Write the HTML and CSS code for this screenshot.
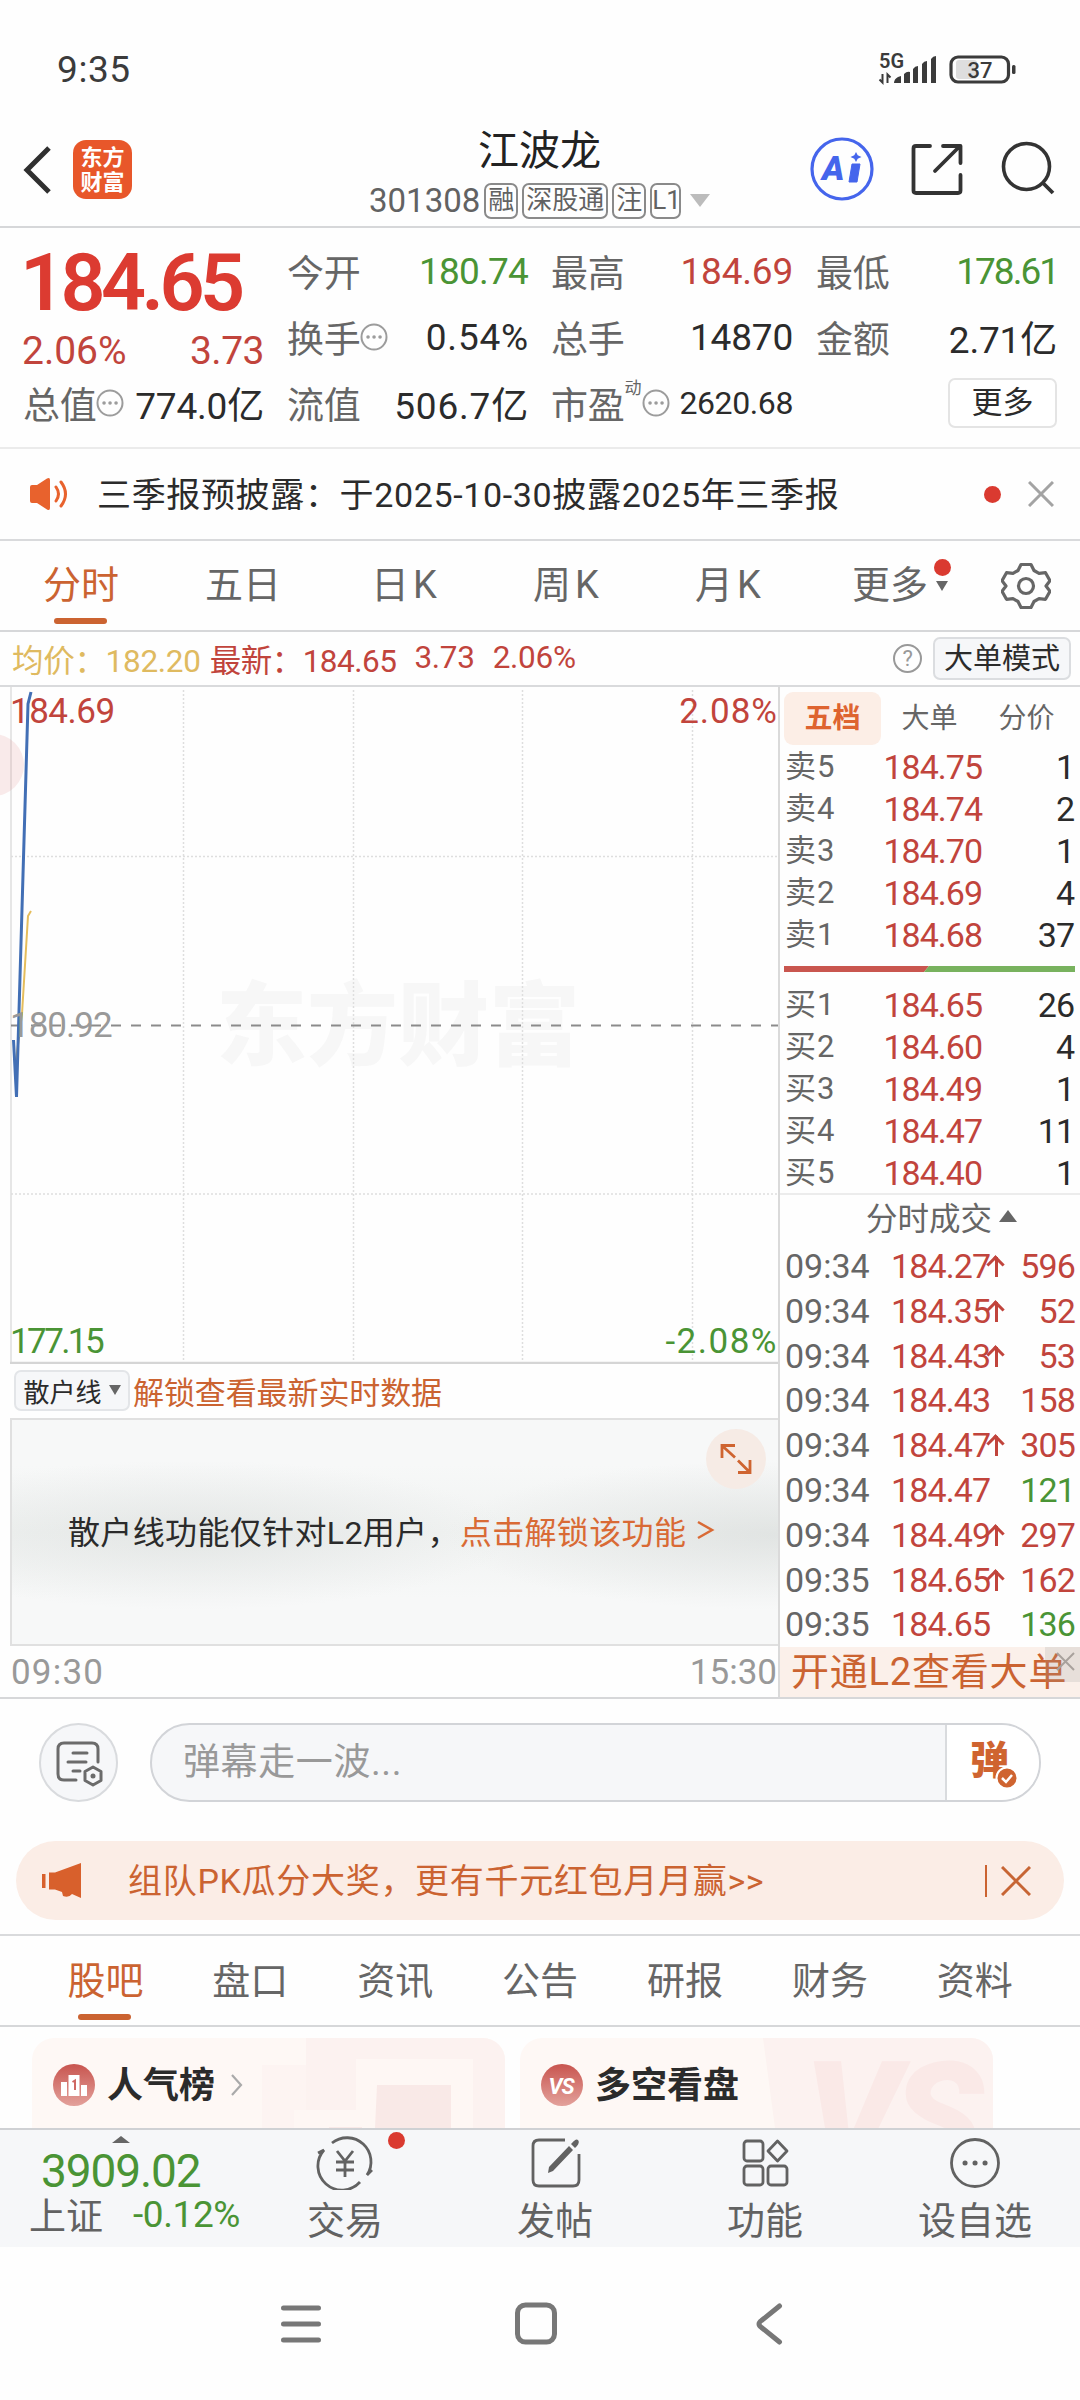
FILE: index.html
```html
<!DOCTYPE html>
<html lang="zh-CN">
<head>
<meta charset="utf-8">
<title>江波龙 301308</title>
<link rel="stylesheet" href="styles.css">
</head>
<body>
<div class="screen">

<div class="status">
  <span class="clock">9:35</span>
  <svg class="status-icons" width="144" height="40" viewBox="874 50 144 40">
    <text x="879" y="68" class="net">5G</text>
    <g fill="#3b3b3b"><path d="M894 83q0-4 4-6l3-1v7z"/><path d="M904 83v-9q3-3 6-2v11zM913 83V69q2-3 5-3v17zM922 83V64q2-3 5-3v22zM931 83V59q2-3 5-3v27z"/></g>
    <path d="M882.500 74v8.500l-3-3M887.500 83v-8.500l3 3" fill="none" stroke="#3b3b3b" stroke-width="2"/>
    <rect x="956" y="60" width="21" height="19" rx="3" fill="#dedede"/>
    <rect x="951" y="57" width="57.500" height="25" rx="7" fill="none" stroke="#3b3b3b" stroke-width="3.200"/>
    <rect x="1012" y="65" width="3.500" height="9" rx="1.500" fill="#3b3b3b"/>
    <text x="980" y="78" class="bat">37</text>
  </svg>
</div>

<header class="head">
  <div class="head-left">
    <svg class="back" width="30" height="50" viewBox="0 0 30 50"><path d="M26 3L4 25l22 22" fill="none" stroke="#303030" stroke-width="5"/></svg>
    <div class="logo"><span>东方</span><span>财富</span></div>
  </div>
  <div class="head-mid">
    <h1>江波龙</h1>
    <div class="code"><span class="num">301308</span><i>融</i><i class="w3">深股通</i><i>注</i><i>L1</i><b class="tri-down"></b></div>
  </div>
  <svg class="head-icons" width="260" height="70" viewBox="805 134 260 70">
    <circle cx="842" cy="169" r="30" fill="none" stroke="#4565ec" stroke-width="3.200"/>
    <text x="822" y="180" class="ai">A</text>
    <path d="M852 164h8l-3 18h-8z" fill="#4565ec" stroke="#4565ec" stroke-linejoin="round"/>
    <path d="M856 152l1.700 3.300 3.800 1.700-3.800 1.700-1.700 3.300-1.700-3.300-3.800-1.700 3.800-1.700z" fill="#4565ec"/>
    <path d="M930 146h-14q-2.500 0-2.500 2.500v42q0 2.500 2.500 2.500h42q2.500 0 2.500-2.500V175M943 146h17.500v17M960 146l-25 25" fill="none" stroke="#333" stroke-width="3.800" stroke-linecap="round" stroke-linejoin="round"/>
    <circle cx="1026.500" cy="166.500" r="23" fill="none" stroke="#333" stroke-width="3.600"/>
    <path d="M1042 182l11 11" stroke="#333" stroke-width="3.800"/>
  </svg>
</header>

<section class="quote">
  <div class="q-main">
    <div class="price">184.65</div>
    <div class="chg"><span>2.06%</span><span>3.73</span></div>
    <div class="q-cell"><label>总值</label><svg class="dots" viewBox="0 0 28 28"><circle cx="14" cy="14" r="12.500"/><path d="M8 14h.1M14 14h.1M20 14h.1"/></svg><span class="v">774.0亿</span></div>
  </div>
  <div class="q-col">
    <div class="q-cell"><label>今开</label><span class="v green">180.74</span></div>
    <div class="q-cell"><label>换手</label><svg class="dots" viewBox="0 0 28 28"><circle cx="14" cy="14" r="12.500"/><path d="M8 14h.1M14 14h.1M20 14h.1"/></svg><span class="v wide">0.54%</span></div>
    <div class="q-cell"><label>流值</label><span class="v wide">506.7亿</span></div>
  </div>
  <div class="q-col">
    <div class="q-cell"><label>最高</label><span class="v red">184.69</span></div>
    <div class="q-cell"><label>总手</label><span class="v">14870</span></div>
    <div class="q-cell"><label>市盈</label><sup>动</sup><svg class="dots" viewBox="0 0 28 28"><circle cx="14" cy="14" r="12.500"/><path d="M8 14h.1M14 14h.1M20 14h.1"/></svg><span class="v small">2620.68</span></div>
  </div>
  <div class="q-col">
    <div class="q-cell"><label>最低</label><span class="v green tight">178.61</span></div>
    <div class="q-cell"><label>金额</label><span class="v">2.71亿</span></div>
    <div class="q-cell"><button class="more">更多</button></div>
  </div>
</section>

<section class="notice">
  <svg width="40" height="36" viewBox="0 0 40 36"><path d="M1 11q0-2 2-2h5L18 2.500q3-1.500 3 1.500v28q0 3-3 1.500L8 27H3q-2 0-2-2z" fill="#e8622d"/><path d="M27 11q5 7 0 14M32 6q9 12 0 24" fill="none" stroke="#e8622d" stroke-width="3" stroke-linecap="round"/></svg>
  <p>三季报预披露：于2025-10-30披露2025年三季报</p>
  <span class="dot"></span>
  <svg width="26" height="26" viewBox="0 0 26 26"><path d="M1 1l24 24M25 1L1 25" stroke="#a3a3a3" stroke-width="3"/></svg>
</section>

<nav class="periods">
  <span class="on">分时</span><span>五日</span><span class="k">日K</span><span class="k">周K</span><span class="k">月K</span>
  <span class="p-more">更多<i class="dot"></i><b class="tri-down dark"></b></span>
  <svg class="gear" width="50" height="50" viewBox="-25 -25 50 50"><path d="M-5-21.500h10l3 6 5 2.800 6.500-.6 4.500 8-4 5.300v0l4 5.300-4.500 8-6.500-.6-5 2.800-3 6h-10l-3-6-5-2.800-6.500.6-4.500-8 4-5.300-4-5.300 4.500-8 6.500.6 5-2.800z" fill="none" stroke="#666" stroke-width="3.200" stroke-linejoin="round"/><circle r="7.500" fill="none" stroke="#666" stroke-width="3.200"/></svg>
</nav>

<div class="avg">
  <span class="yellow">均价：182.20</span><span class="red latest">最新：184.65</span><span class="red a3">3.73</span><span class="red a4">2.06%</span>
  <span class="q">?</span><button>大单模式</button>
</div>

<main class="board">
  <div class="left">
    <div class="chart">
      <span class="mark">东方财富</span>
      <svg width="778" height="677" viewBox="0 687 778 677">
        <g stroke="#dedede" stroke-width="1.500" fill="none">
          <g stroke-dasharray="2 2"><path d="M183.500 690V1362M353.500 690V1362M522.500 690V1362M692.500 690V1362M11 856.500H778M11 1194H778"/></g>
          <path d="M11 687V1363"/><path d="M10 1363H778" stroke="#d5d5d5" stroke-width="2.500"/>
        </g>
        <path d="M11 1025.500H778" stroke="#8b8b8b" stroke-width="2" stroke-dasharray="10 10"/>
        <circle cx="-7" cy="765" r="31" fill="#d65a5a" fill-opacity=".12"/>
        <path d="M16 1060L22 1014 28 916 31 911" fill="none" stroke="#e5bd5c" stroke-width="2"/>
        <path d="M13.500 1040L16.500 1097 28 704 31 692" fill="none" stroke="#426fb5" stroke-width="3"/>
      </svg>
      <span class="lb tl red">184.69</span><span class="lb tr red">2.08%</span>
      <span class="lb ml">180.92</span>
      <span class="lb bl green">177.15</span><span class="lb br green">-2.08%</span>
    </div>
    <div class="sub-head"><button>散户线<b class="tri-down dark"></b></button><span>解锁查看最新实时数据</span></div>
    <div class="locked">
      <p>散户线功能仅针对L2用户，<em>点击解锁该功能</em></p>
      <svg class="gt" width="18" height="20" viewBox="0 0 18 20"><path d="M1 2l14 8-14 8" fill="none" stroke="#d96a35" stroke-width="2.500"/></svg>
      <svg class="expand" width="60" height="60" viewBox="0 0 60 60"><circle cx="30" cy="30" r="30" fill="#f6ebe5"/><path d="M16 29V16.500h13M17 17.500l12 11M44 31v12.500H32M43 42.500l-11-11" fill="none" stroke="#cf6430" stroke-width="2.800"/></svg>
    </div>
    <div class="axis"><span>09:30</span><span>15:30</span></div>
  </div>

  <aside class="right">
    <div class="b-tabs"><span class="on">五档</span><span>大单</span><span>分价</span></div>
    <div class="levels">
      <div><span>卖5</span><span>184.75</span><span>1</span></div>
      <div><span>卖4</span><span>184.74</span><span>2</span></div>
      <div><span>卖3</span><span>184.70</span><span>1</span></div>
      <div><span>卖2</span><span>184.69</span><span>4</span></div>
      <div><span>卖1</span><span>184.68</span><span>37</span></div>
    </div>
    <svg class="ratio" width="291" height="6" viewBox="0 0 291 6"><path d="M0 0H145L140 6H0z" fill="#c9564f"/><path d="M145 0H291V6H140z" fill="#78b25e"/></svg>
    <div class="levels">
      <div><span>买1</span><span>184.65</span><span>26</span></div>
      <div><span>买2</span><span>184.60</span><span>4</span></div>
      <div><span>买3</span><span>184.49</span><span>1</span></div>
      <div><span>买4</span><span>184.47</span><span>11</span></div>
      <div><span>买5</span><span>184.40</span><span>1</span></div>
    </div>
    <div class="t-head">分时成交<b class="tri-up"></b></div>
    <div class="trades">
      <div><span>09:34</span><span class="up">184.27</span><span class="red">596</span></div>
      <div><span>09:34</span><span class="up">184.35</span><span class="red">52</span></div>
      <div><span>09:34</span><span class="up">184.43</span><span class="red">53</span></div>
      <div><span>09:34</span><span>184.43</span><span class="red">158</span></div>
      <div><span>09:34</span><span class="up">184.47</span><span class="red">305</span></div>
      <div><span>09:34</span><span>184.47</span><span class="green">121</span></div>
      <div><span>09:34</span><span class="up">184.49</span><span class="red">297</span></div>
      <div><span>09:35</span><span class="up">184.65</span><span class="red">162</span></div>
      <div><span>09:35</span><span>184.65</span><span class="green">136</span></div>
    </div>
    <div class="promo">开通L2查看大单<svg width="35" height="35" viewBox="0 0 35 35"><rect width="35" height="35" fill="#999" fill-opacity=".2"/><path d="M12 6l17 17M29 6L12 23" stroke="#a8a19c" stroke-width="2"/></svg></div>
  </aside>
</main>

<section class="talk">
  <div class="round"><svg width="50" height="50" viewBox="0 0 50 50"><path d="M22 42H10q-6 0-6-6V11q0-6 6-6h28q6 0 6 6v13M19 15h14M14 24h18M19 33h7" fill="none" stroke="#6b6b6b" stroke-width="3" stroke-linecap="round"/><path d="M39 29l8 4.500v9L39 47l-8-4.500v-9z" fill="#f6f7f9" stroke="#6b6b6b" stroke-width="3" stroke-linejoin="round"/><circle cx="39" cy="38" r="2.500" fill="#6b6b6b"/></svg></div>
  <div class="input"><span class="ph">弹幕走一波...</span><span class="dan">弹<svg width="24" height="24" viewBox="0 0 24 24"><circle cx="12" cy="12" r="10.500" fill="#cf6430" stroke="#fff" stroke-width="2"/><path d="M7 12l4 4 6-7" fill="none" stroke="#fff" stroke-width="2.500"/></svg></span></div>
</section>

<section class="banner">
  <svg width="42" height="36" viewBox="0 0 42 36"><path d="M1 11h3.500v14H1zM8 9.500h6L40 0v35l-9-4q-3 4-9 2l-1-4-7-2.500H8z" fill="#d8602c"/></svg>
  <p>组队PK瓜分大奖，更有千元红包月月赢&gt;&gt;</p>
  <i></i>
  <svg class="x" width="30" height="30" viewBox="0 0 30 30"><path d="M1 1l28 28M29 1L1 29" stroke="#c76534" stroke-width="3"/></svg>
</section>

<nav class="tabs"><span class="on">股吧</span><span>盘口</span><span>资讯</span><span>公告</span><span>研报</span><span>财务</span><span>资料</span></nav>

<section class="cards">
  <div class="card">
    <svg class="deco" width="473" height="90" viewBox="0 0 473 90"><path d="M274 0H473V90H230V27h44z" fill="#fcf2f0"/><path d="M230 27h44v45h-12v18h-32z" fill="#fdf4f2"/><path d="M324 21H441V90H262V72h62z" fill="#fef7f4"/><path d="M345 47h74v43h-76z" fill="#f9e9e7"/><path d="M297 89h33v1h-33z" fill="#f9e9e7"/></svg>
    <svg class="badge" width="42" height="42" viewBox="0 0 42 42"><defs><linearGradient id="g" x2="0" y2="1"><stop offset="0" stop-color="#c8554f"/><stop offset="1" stop-color="#e3a19b"/></linearGradient></defs><circle cx="21" cy="21" r="21" fill="url(#g)"/><path d="M8 18h6v14H8zM15.500 11h11v21h-11zM28 21h6v11h-6z" fill="#fff"/><path d="M19.500 18l2.500-1.500V26" fill="none" stroke="#cf6863" stroke-width="2"/></svg>
    <b>人气榜</b>
    <svg width="14" height="22" viewBox="0 0 14 22"><path d="M2 1l9 10-9 10" fill="none" stroke="#aaa" stroke-width="2.200"/></svg>
  </div>
  <div class="card">
    <svg class="deco" width="473" height="90" viewBox="0 0 473 90"><path d="M243 0H473V90H255z" fill="#fcf2f0"/><text x="284" y="130" class="vs-big">VS</text></svg>
    <svg class="badge" width="42" height="42" viewBox="0 0 42 42"><circle cx="21" cy="21" r="21" fill="url(#g)"/><text x="20" y="30" class="vs">VS</text></svg>
    <b>多空看盘</b>
  </div>
</section>

<footer class="bar">
  <div class="index"><b class="tri-up"></b><strong>3909.02</strong><p><span>上证</span><em>-0.12%</em></p></div>
  <div class="item"><svg width="60" height="54" viewBox="-30 -27 60 54"><g fill="none" stroke="#626262" stroke-width="2.800"><path d="M-13-20A24 24 0 0 1 22 12l5-5"/><path d="M15 19A24 24 0 0 1-21-13l-6 3"/><path d="M-8-12L0-2 8-12M0-2V14M-9-1H9M-9 7H9"/></g></svg><i class="dot"></i><span>交易</span></div>
  <div class="item"><svg width="60" height="54" viewBox="-30 -27 60 54"><path d="M10-23h-26q-6 0-6 6v34q0 6 6 6h34q6 0 6-6V-9" fill="none" stroke="#626262" stroke-width="2.800"/><path d="M14-17l4 4L-2 8l-5 2 1-6zM17-20q4-5 6-3t-1 6l-2 2-4-4z" fill="#626262"/></svg><span>发帖</span></div>
  <div class="item"><svg width="60" height="54" viewBox="-30 -27 60 54"><g fill="none" stroke="#626262" stroke-width="2.800" stroke-linejoin="round"><rect x="-21" y="-22" width="19" height="20" rx="3"/><rect x="-21" y="3" width="19" height="19" rx="3"/><rect x="3" y="3" width="19" height="19" rx="3"/><path d="M12.500-22L22-12 12.500-2 3-12z"/></g></svg><span>功能</span></div>
  <div class="item"><svg width="60" height="54" viewBox="-30 -27 60 54"><circle r="23.500" fill="none" stroke="#626262" stroke-width="2.800"/><path d="M-10 0h.1M0 0h.1M10 0h.1" stroke="#626262" stroke-width="5" stroke-linecap="round"/></svg><span>设自选</span></div>
</footer>

<nav class="sys">
  <svg width="540" height="50" viewBox="270 2299 540 50"><g fill="none" stroke="#777" stroke-width="5" stroke-linecap="round" stroke-linejoin="round"><path d="M283.500 2308h35M283.500 2324h35M283.500 2340h35"/><rect x="517.500" y="2305" width="37" height="37" rx="8"/><path d="M779.500 2306l-18 14.500q-5 3.500 0 7L779.500 2342"/></g></svg>
</nav>

</div>
</body>
</html>
```
FILE: styles.css
```css
* { box-sizing: border-box; }
body {
  margin: 0;
  background: #fefefe;
  color: #2b2b2b;
  font-family: Roboto, "Noto Sans CJK SC", sans-serif;
}
h1, p { margin: 0; font-weight: 400; }
i, em { font-style: normal; }
button { font: inherit; padding: 0; color: inherit; }
svg { display: block; flex: none; }
.screen { width: 1080px; height: 2400px; overflow: hidden; display: flex; flex-direction: column; }
.screen > * { flex: none; white-space: nowrap; }
.red { color: #c1443c; }
.green { color: #4a9435; }
.dot { display: block; width: 17px; height: 17px; border-radius: 50%; background: #da3a30; }
.tri-down { border: 10px solid transparent; border-top: 13px solid #bcbcbc; border-bottom: 0; }
.tri-down.dark { border-width: 10px 6.5px 0; border-top-color: #666; }
.tri-up { border: 9px solid transparent; border-bottom: 12px solid #666; border-top: 0; }

.status { height: 104px; padding: 36px 62px 0 57px; display: flex; justify-content: space-between; align-items: center; }
.clock { font-size: 37px; font-weight: 450; color: #3b3b3b; line-height: 68px; letter-spacing: .6px; }
.net { font: 600 20px Roboto, sans-serif; fill: #3b3b3b; }
.bat { font: 500 22px Roboto, sans-serif; fill: #3b3b3b; text-anchor: middle; }

.head { height: 124px; border-bottom: 2px solid #d6d7d9; padding: 0 15px 0 23px; display: grid; grid-template-columns: 342px 1fr 260px; }
.head-left { display: flex; align-items: center; gap: 20px; padding-top: 6px; }
.logo { width: 59px; height: 59px; border-radius: 13px; background: #e8572a; color: #fff; font-weight: 700; font-size: 22px; line-height: 25px; display: flex; flex-direction: column; align-items: center; justify-content: center; }
.head-mid { padding-top: 24px; }
h1 { font-size: 41px; line-height: 46px; color: #222; padding-left: 113px; }
.code { display: flex; align-items: center; height: 55px; padding: 0 0 2px 4px; gap: 4px; color: #626262; font-size: 27px; }
.code .num { font-size: 33px; letter-spacing: 0; }
.code i { width: 34px; height: 36px; border: 2px solid #8a8a8a; border-radius: 7px; line-height: 30px; text-align: center; font-size: 26px; }
.code i.w3 { width: 86px; }
.code i:nth-of-type(4) { width: 31px; }
.code b { margin-left: 5px; }
.head-icons { margin-top: 30px; }
.ai { font: italic 900 34px Roboto, sans-serif; fill: #4565ec; }

.quote { height: 221px; border-bottom: 2px solid #ebebeb; padding: 11px 22px 0 23px; display: grid; grid-template-columns: 241px 241px 242px 241px; column-gap: 23px; }
.q-col, .q-main { display: flex; flex-direction: column; }
.price { height: 87px; line-height: 89px; font-size: 79px; font-weight: 600; letter-spacing: -4.6px; color: #dc3b31; margin-left: -3px; }
.chg { height: 45px; padding-top: 4px; display: flex; justify-content: space-between; align-items: center; color: #c1443c; font-size: 39px; margin-left: -1px; }
.chg span:last-child { letter-spacing: -.5px; }
.q-cell { height: 66px; display: flex; align-items: center; font-size: 37px; padding-bottom: 2px; }
.q-cell label { color: #666; letter-spacing: -.3px; }
.q-cell .v { margin-left: auto; letter-spacing: -.2px; }
.q-cell .v.wide { letter-spacing: .8px; margin-right: -1px; }
.q-cell .v.green { letter-spacing: -.8px; }
.q-cell .v.tight { letter-spacing: -2px; margin-right: -1px; }
.q-cell .v.small { font-size: 32px; letter-spacing: -.4px; }
.q-cell sup { font-size: 17px; color: #666; align-self: flex-start; line-height: 20px; margin: 7px 1px 0 0; }
.dots { width: 28px; height: 28px; fill: none; stroke: #9c9c9c; stroke-width: 2; }
.dots path { stroke-width: 3.500; stroke-linecap: round; }
.more { margin-left: auto; width: 109px; height: 50px; border: 2px solid #e4e4e4; border-radius: 7px; background: #fff; font-size: 31px; line-height: 44px; }

.notice { height: 92px; border-bottom: 2px solid #d9dadc; padding: 0 26px 0 29px; display: flex; align-items: center; }
.notice p { font-size: 34px; margin-left: 28px; letter-spacing: .65px; padding-bottom: 4px; }
.notice .dot { margin-left: auto; margin-right: 27px; }

.periods { height: 91px; border-bottom: 2px solid #d6d7d9; display: flex; align-items: center; padding: 0 29px 0 0; font-size: 38px; color: #666; }
.periods > span { width: 162px; text-align: center; line-height: 91px; height: 91px; position: relative; }
.periods > .k { letter-spacing: 4px; padding-left: 2px; }
.periods > .p-more { margin-left: 17px; width: 125px; text-align: left; padding-left: 25px; }
.on { color: #cb6331; }
.periods .on:after, .tabs .on:after { content: ""; position: absolute; left: 50%; bottom: 7px; width: 53px; height: 6px; margin-left: -27px; border-radius: 3px; background: #cb6331; }
.p-more .dot { position: absolute; left: 107px; top: 19px; }
.p-more b { position: absolute; left: 109px; top: 41px; }
.gear { margin-left: auto; }

.avg { height: 55px; border-bottom: 2px solid #d9dadc; display: flex; align-items: center; font-size: 31.500px; padding: 0 9px 0 12px; letter-spacing: -.3px; }
.avg > span { margin-top: -2px; }
.yellow { color: #dfba60; }
.avg .latest { margin-left: 9px; letter-spacing: -.5px; }
.avg .a3, .avg .a4 { margin-left: 18px; }
.avg > .q { margin: 0 11px 0 auto; width: 29px; height: 29px; border: 2px solid #999; border-radius: 50%; font-size: 22px; line-height: 26px; text-align: center; color: #999; }
.avg button { width: 138px; height: 43px; background: #f6f7f9; border: 2px solid #dbdde0; border-radius: 7px; font-size: 29px; line-height: 38px; letter-spacing: 0; }

.board { height: 1012px; display: grid; grid-template-columns: 778px 302px; border-bottom: 2px solid #d6d7d9; }
.left { display: flex; flex-direction: column; }
.chart { height: 677px; position: relative; }
.chart svg { position: relative; }
.mark { position: absolute; left: 216px; top: 275px; font-size: 91px; line-height: 130px; font-weight: 900; color: #f7f7f7; }
.lb { position: absolute; font-size: 35px; line-height: 40px; letter-spacing: -.5px; }
.tl { left: 10px; top: 5px; } .tr { right: 0; top: 5px; letter-spacing: 1px; }
.ml { left: 10px; top: 319px; color: #999; letter-spacing: -1px; }
.bl { left: 10px; bottom: 2px; letter-spacing: -2.6px; } .br { right: 0; bottom: 2px; letter-spacing: 1.500px; }
.sub-head { height: 54px; padding: 0 0 2px 14px; display: flex; align-items: center; gap: 3px; color: #cb6331; font-size: 31px; }
.sub-head span { letter-spacing: -.1px; }
.sub-head button { width: 116px; height: 41px; background: #f6f7f9; border: 2px solid #e3e5e8; border-radius: 7px; color: #2b2b2b; font-size: 26px; display: flex; align-items: center; justify-content: center; gap: 7px; }
.locked { height: 228px; margin-left: 10px; border: 2px solid #e0e0e0; border-right: 0; position: relative; display: flex; align-items: center; padding: 0 0 5px 56px; background: radial-gradient(ellipse 320px 75px at 180px 115px, rgba(195,200,198,.3), transparent), radial-gradient(ellipse 330px 75px at 765px 115px, rgba(195,200,198,.35), transparent), linear-gradient(#f7f8f8 20%, #f1f3f2 50%, #f7f8f8 80%); }
.locked p { font-size: 32px; letter-spacing: .35px; }
.locked em { color: #d96a35; }
.gt { margin-left: 11px; }
.expand { position: absolute; left: 694px; top: 9px; }
.axis { height: 51px; display: flex; justify-content: space-between; align-items: center; padding: 2px 1px 0 11px; color: #999; font-size: 35px; }
.axis span:first-child { letter-spacing: 1.200px; }

.right { border-left: 2px solid #dadada; display: flex; flex-direction: column; }
.b-tabs { display: flex; padding: 5px 0 0 4px; height: 58px; font-size: 28px; color: #666; }
.b-tabs span { width: 97px; height: 53px; line-height: 53px; text-align: center; }
.b-tabs .on { background: #fceee6; border-radius: 9px; font-weight: 700; color: #de6430; }
.levels { height: 210px; font-size: 34px; }
.levels + .ratio { margin: 11px 0 11px 4px; }
.levels div { height: 42px; line-height: 44px; display: grid; grid-template-columns: 80px 117px 92px; padding-left: 5px; }
.levels span { text-align: right; letter-spacing: -1px; }
.levels span:first-child { text-align: left; color: #666; font-size: 31px; letter-spacing: 1px; }
.levels span:nth-child(2) { color: #c1443c; }
.t-head { border-top: 2px solid #ececec; height: 52px; padding: 0 0 8px 86px; display: flex; align-items: center; gap: 7px; font-size: 31.500px; color: #666; }
.trades { height: 402px; }
.trades div { height: 44.800px; line-height: 43px; display: grid; grid-template-columns: 106px 95px 93px; font-size: 34px; color: #666; padding-left: 5px; letter-spacing: -.9px; }
.trades span:first-child { letter-spacing: 0; }
.trades span:nth-child(2) { color: #c1443c; text-align: right; position: relative; }
.trades span:nth-child(3) { text-align: right; padding-right: 4px; }
.up:before, .up:after { content: ""; position: absolute; }
.up:before { right: -12px; top: 12px; width: 3px; height: 20px; background: #c1443c; }
.up:after { right: -15.500px; top: 13px; width: 10px; height: 10px; border: solid #c1443c; border-width: 3px 0 0 3px; transform: rotate(45deg); }
.promo { flex: 1; background: #fbf0ea; color: #cb6331; font-size: 38px; line-height: 50px; padding-left: 11px; position: relative; letter-spacing: .8px; }
.promo svg { position: absolute; right: 0; top: 0; }

.talk { height: 142px; padding: 24px 39px 0 39px; display: flex; gap: 32px; }
.round { width: 79px; height: 79px; border: 2px solid #d9dbde; border-radius: 50%; background: #f6f7f9; display: flex; align-items: center; justify-content: center; }
.input { flex: 1; height: 79px; border: 2px solid #d2d4d8; border-radius: 40px; background: #f6f7f9; display: flex; overflow: hidden; }
.ph { flex: 1; padding-left: 31px; line-height: 75px; font-size: 37px; color: #999; letter-spacing: .6px; }
.dan { width: 94px; border-left: 2px solid #d9dbde; background: #fff; color: #cf6430; font-weight: 900; font-size: 39px; line-height: 72px; padding-left: 23px; position: relative; }
.dan svg { position: absolute; left: 48px; top: 41px; }

.banner { margin: 0 16px; height: 79px; border-radius: 40px; background: #fbede6; color: #cb6331; display: flex; align-items: center; padding: 0 33px 0 25px; font-size: 34px; }
.banner p { margin-left: 45px; letter-spacing: .7px; padding-bottom: 4px; }
.banner i { width: 2px; height: 32px; margin: 0 14px 0 auto; background: #cb6331; }

.tabs { margin-top: 14px; height: 93px; border-top: 2px solid #d9dadc; border-bottom: 2px solid #d6d7d9; padding: 0 33px; display: grid; grid-template-columns: repeat(7, 144.900px); text-align: center; font-size: 38px; line-height: 90px; color: #666; }
.tabs span { position: relative; }
.tabs .on:after { bottom: 6px; }

.cards { height: 101px; padding: 11px 0 0 32px; display: flex; gap: 15px; overflow: hidden; }
.card { width: 473px; height: 120px; border-radius: 22px; background: #fef8f5; position: relative; overflow: hidden; display: flex; align-items: flex-start; padding: 20px 0 0 21px; font-size: 36px; line-height: 52px; }
.card > * { position: relative; }
.card b { margin: 2px 15px 0 12px; }
.card .badge { margin-top: 6px; }
.card > svg:last-child { margin-top: 16px; }
.card .deco { position: absolute; left: 0; top: 0; }
.vs { font: italic 700 22px Roboto, sans-serif; fill: #fff; text-anchor: middle; letter-spacing: -1px; }
.vs-big { font: italic 900 150px Roboto, sans-serif; fill: #fae9e7; letter-spacing: -8px; }

.bar { height: 119px; border-top: 2px solid #cfd1d4; background: #f6f7f9; display: grid; grid-template-columns: 240px 210px 210px 210px 210px; color: #626262; }
.index { position: relative; padding: 16px 0 0 29px; }
.index > b { position: absolute; left: 112px; top: 6px; border-width: 0 9px 7px; }
.index strong { display: block; font-weight: 400; font-size: 46px; line-height: 50px; letter-spacing: -1.100px; color: #4a9435; padding-left: 12px; }
.index p { display: flex; align-items: center; justify-content: space-between; height: 36px; font-size: 37px; }
.index em { color: #4a9435; letter-spacing: -.4px; }
.item { position: relative; display: flex; flex-direction: column; align-items: center; padding-top: 6px; font-size: 38px; line-height: 62px; }
.item .dot { position: absolute; left: 148px; top: 2px; }
.sys { flex: 1 !important; padding: 52px 0 0 270px; }
```
